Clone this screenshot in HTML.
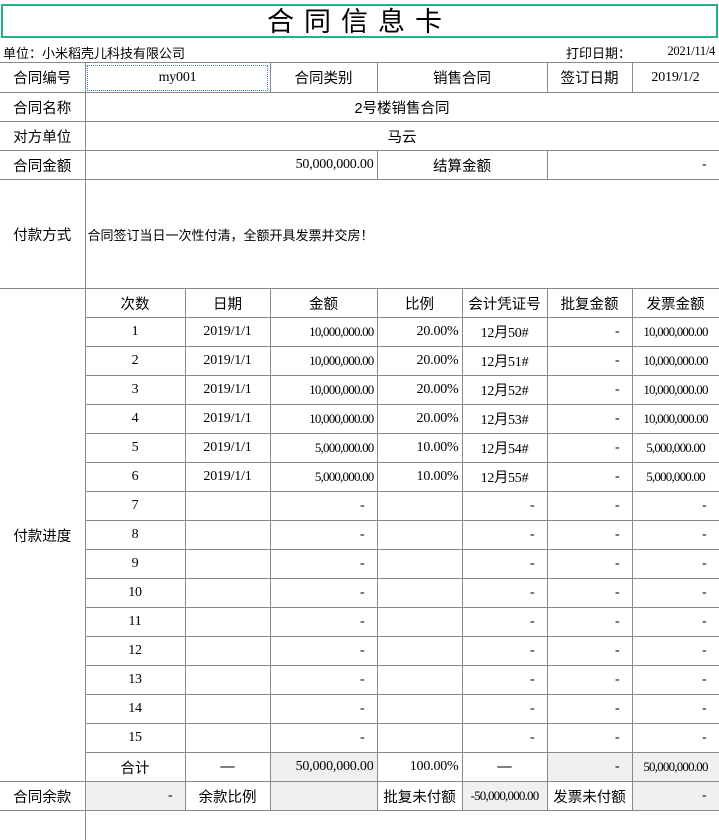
<!DOCTYPE html>
<html><head><meta charset="utf-8"><style>
body{margin:0;width:719px;height:816px;overflow:hidden;background:#fff;font-family:"Liberation Sans","Noto Sans CJK SC",sans-serif;font-size:14.5px;color:#000;position:relative}
.title{position:absolute;left:1px;top:4px;width:713px;height:30px;border:2px solid #1fb57c;text-align:center;font-size:27px;letter-spacing:10px;line-height:32px}
.unit{position:absolute;left:3px;top:43px;font-size:13px}
.pd{position:absolute;left:566px;top:43px;font-size:13px}
.pdv{position:absolute;right:4px;top:44px;font-size:12.5px;font-family:"Liberation Serif",serif;letter-spacing:-0.3px}
table{position:absolute;left:0;top:62px;border-collapse:collapse;table-layout:fixed;width:719px}
td{border:1px solid #8a8a8a;height:28px;padding:0 3px;text-align:center;white-space:nowrap;overflow:hidden;box-sizing:border-box}
td.n{font-family:"Liberation Serif",serif;font-size:14px;letter-spacing:-0.2px}
td.s{font-family:"Liberation Serif",serif;font-size:13px;letter-spacing:-0.8px}
td.r{text-align:right}
td.d{text-align:right;padding-right:12px}
td.l{text-align:left}
td.g{background:#f0f0f0}
td:first-child{border-left:none}
.sel{outline:1px dotted #3a7bd5;outline-offset:-3px}
</style></head><body>
<div class="title">合同信息卡</div>
<div class="unit">单位：小米稻壳儿科技有限公司</div>
<div class="pd">打印日期：</div>
<div class="pdv">2021/11/4</div>
<table>
<colgroup><col style="width:85px"><col style="width:100px"><col style="width:85px"><col style="width:107px"><col style="width:85px"><col style="width:85px"><col style="width:85px"><col style="width:87px"></colgroup>
<tr style="height:30px"><td>合同编号</td><td colspan="2" class="n sel">my001</td><td>合同类别</td><td colspan="2">销售合同</td><td>签订日期</td><td class="n">2019/1/2</td></tr>
<tr style="height:29px"><td>合同名称</td><td colspan="7">2号楼销售合同</td></tr>
<tr style="height:29px"><td>对方单位</td><td colspan="7">马云</td></tr>
<tr style="height:29px"><td>合同金额</td><td colspan="3" class="n r">50,000,000.00</td><td colspan="2">结算金额</td><td colspan="2" class="n d">-</td></tr>
<tr style="height:109px"><td>付款方式</td><td colspan="7" class="l" style="font-size:13px;padding-left:2px">合同签订当日一次性付清，全额开具发票并交房！</td></tr>
<tr style="height:29px"><td rowspan="17">付款进度</td><td>次数</td><td>日期</td><td>金额</td><td>比例</td><td>会计凭证号</td><td>批复金额</td><td>发票金额</td></tr>
<tr style="height:29px"><td class="n">1</td><td class="n">2019/1/1</td><td class="s r">10,000,000.00</td><td class="n r">20.00%</td><td class="n">12月50#</td><td class="n d">-</td><td class="s">10,000,000.00</td></tr>
<tr style="height:29px"><td class="n">2</td><td class="n">2019/1/1</td><td class="s r">10,000,000.00</td><td class="n r">20.00%</td><td class="n">12月51#</td><td class="n d">-</td><td class="s">10,000,000.00</td></tr>
<tr style="height:29px"><td class="n">3</td><td class="n">2019/1/1</td><td class="s r">10,000,000.00</td><td class="n r">20.00%</td><td class="n">12月52#</td><td class="n d">-</td><td class="s">10,000,000.00</td></tr>
<tr style="height:29px"><td class="n">4</td><td class="n">2019/1/1</td><td class="s r">10,000,000.00</td><td class="n r">20.00%</td><td class="n">12月53#</td><td class="n d">-</td><td class="s">10,000,000.00</td></tr>
<tr style="height:29px"><td class="n">5</td><td class="n">2019/1/1</td><td class="s r">5,000,000.00</td><td class="n r">10.00%</td><td class="n">12月54#</td><td class="n d">-</td><td class="s">5,000,000.00</td></tr>
<tr style="height:29px"><td class="n">6</td><td class="n">2019/1/1</td><td class="s r">5,000,000.00</td><td class="n r">10.00%</td><td class="n">12月55#</td><td class="n d">-</td><td class="s">5,000,000.00</td></tr>
<tr style="height:29px"><td class="n">7</td><td></td><td class="n d">-</td><td></td><td class="n d">-</td><td class="n d">-</td><td class="n d">-</td></tr>
<tr style="height:29px"><td class="n">8</td><td></td><td class="n d">-</td><td></td><td class="n d">-</td><td class="n d">-</td><td class="n d">-</td></tr>
<tr style="height:29px"><td class="n">9</td><td></td><td class="n d">-</td><td></td><td class="n d">-</td><td class="n d">-</td><td class="n d">-</td></tr>
<tr style="height:29px"><td class="n">10</td><td></td><td class="n d">-</td><td></td><td class="n d">-</td><td class="n d">-</td><td class="n d">-</td></tr>
<tr style="height:29px"><td class="n">11</td><td></td><td class="n d">-</td><td></td><td class="n d">-</td><td class="n d">-</td><td class="n d">-</td></tr>
<tr style="height:29px"><td class="n">12</td><td></td><td class="n d">-</td><td></td><td class="n d">-</td><td class="n d">-</td><td class="n d">-</td></tr>
<tr style="height:29px"><td class="n">13</td><td></td><td class="n d">-</td><td></td><td class="n d">-</td><td class="n d">-</td><td class="n d">-</td></tr>
<tr style="height:29px"><td class="n">14</td><td></td><td class="n d">-</td><td></td><td class="n d">-</td><td class="n d">-</td><td class="n d">-</td></tr>
<tr style="height:29px"><td class="n">15</td><td></td><td class="n d">-</td><td></td><td class="n d">-</td><td class="n d">-</td><td class="n d">-</td></tr>
<tr style="height:29px"><td>合计</td><td>—</td><td class="n r g">50,000,000.00</td><td class="n r">100.00%</td><td>—</td><td class="n d g">-</td><td class="s g">50,000,000.00</td></tr>
<tr style="height:29px"><td>合同余款</td><td class="n d g">-</td><td>余款比例</td><td class="g"></td><td>批复未付额</td><td class="s g">-50,000,000.00</td><td>发票未付额</td><td class="n d g">-</td></tr>
<tr style="height:29px"><td style="border-bottom:none"></td><td colspan="7" style="border-right:none;border-bottom:none"></td></tr>
</table>
</body></html>
